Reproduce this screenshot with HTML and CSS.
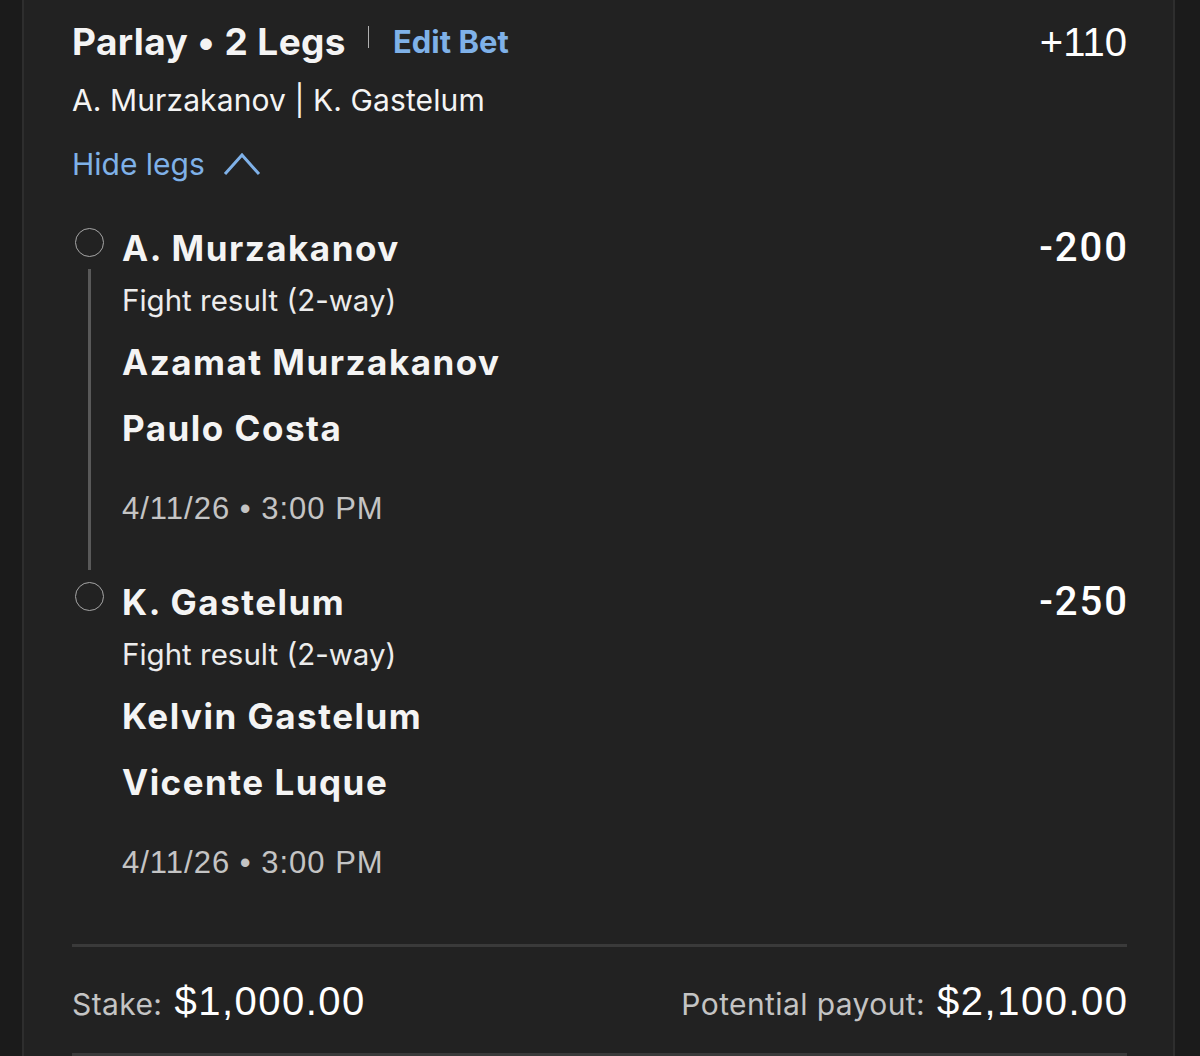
FILE: index.html
```html
<!DOCTYPE html>
<html lang="en">
<head>
<meta charset="utf-8">
<title>Parlay</title>
<link rel="stylesheet" href="styles.css">
</head>
<body>
<div class="page">
  <div class="card">
    <div class="head-row">
      <div class="title-group">
        <span class="title">Parlay • 2 Legs</span>
        <span class="sep"></span>
        <span class="edit">Edit Bet</span>
      </div>
      <span class="odds">+110</span>
    </div>
    <div class="subtitle">A. Murzakanov | K. Gastelum</div>
    <div class="toggle">
      <span>Hide legs</span>
      <svg class="chev" width="38" height="26" viewBox="0 0 38 26"><polyline points="2,23 19,4 36,23" fill="none" stroke="#7fb1e8" stroke-width="3"/></svg>
    </div>

    <div class="leg first">
      <div class="rail"><span class="dot"></span><span class="line"></span></div>
      <div class="leg-body">
        <div class="leg-head"><span class="leg-name">A. Murzakanov</span><span class="leg-odds">-200</span></div>
        <div class="market">Fight result (2-way)</div>
        <div class="fighter">Azamat Murzakanov</div>
        <div class="fighter">Paulo Costa</div>
        <div class="date">4/11/26 • 3:00 PM</div>
      </div>
    </div>

    <div class="leg last">
      <div class="rail"><span class="dot"></span></div>
      <div class="leg-body">
        <div class="leg-head"><span class="leg-name">K. Gastelum</span><span class="leg-odds">-250</span></div>
        <div class="market">Fight result (2-way)</div>
        <div class="fighter">Kelvin Gastelum</div>
        <div class="fighter">Vicente Luque</div>
        <div class="date">4/11/26 • 3:00 PM</div>
      </div>
    </div>

    <div class="divider"></div>
    <div class="totals">
      <div class="total"><span class="t-label">Stake:</span><span class="t-value">$1,000.00</span></div>
      <div class="total"><span class="t-label">Potential payout:</span><span class="t-value">$2,100.00</span></div>
    </div>
    <div class="divider bottom"></div>
  </div>
</div>
</body>
</html>
```

FILE: styles.css
```css
html, body {
  margin: 0;
  padding: 0;
  background: #1b1b1b;
  height: 1056px;
  overflow: hidden;
}
body {
  font-family: "Inter", "Roboto", "Liberation Sans", sans-serif;
  color: #f4f4f4;
}
.page {
  display: flex;
  height: 1056px;
}
.card {
  margin-left: 22px;
  width: 1055px;
  height: 1056px;
  background: #222222;
  border-left: 2px solid #2e2e2e;
  border-right: 2px solid #2e2e2e;
  padding: 0 46px 0 48px;
}

.head-row {
  display: flex;
  justify-content: space-between;
  align-items: center;
  margin-top: 20px;
  height: 44px;
}
.title-group {
  display: flex;
  align-items: center;
}
.title {
  font-size: 37px;
  font-weight: 700;
  letter-spacing: 0.4px;
  line-height: 44px;
}
.sep {
  width: 1px;
  height: 22px;
  background: #b0b0b0;
  margin: 0 24px 10px 22px;
}
.edit {
  font-size: 31px;
  font-weight: 700;
  color: #7fb1e8;
  line-height: 44px;
}
.odds {
  font-family: "Liberation Sans", "Helvetica", sans-serif;
  font-size: 40px;
  line-height: 44px;
  color: #ffffff;
}
.subtitle {
  margin-top: 18px;
  font-size: 30px;
  letter-spacing: 0.1px;
  line-height: 36px;
}
.toggle {
  margin-top: 28px;
  display: flex;
  align-items: center;
  height: 36px;
  font-size: 30px;
  line-height: 36px;
  color: #7fb1e8;
}
.chev {
  margin-left: 18px;
}

.leg {
  display: flex;
}
.leg.first {
  margin-top: 46px;
  padding-bottom: 55px;
}
.rail {
  width: 34px;
  margin-right: 16px;
  display: flex;
  flex-direction: column;
  align-items: center;
}
.dot {
  width: 27px;
  height: 27px;
  border: 1.5px solid #a6a6a6;
  border-radius: 50%;
  flex: none;
}
.line {
  flex: 1;
  width: 3px;
  background: #595959;
  margin-top: 12px;
  margin-bottom: -43px;
}
.leg-body {
  flex: 1;
}
.leg-head {
  display: flex;
  justify-content: space-between;
  align-items: center;
  height: 40px;
}
.leg-name {
  font-size: 35px;
  font-weight: 700;
  letter-spacing: 1.5px;
  line-height: 40px;
}
.leg-odds {
  font-family: "Roboto", "Liberation Sans", sans-serif;
  font-size: 40px;
  font-weight: 500;
  letter-spacing: 2px;
  margin-right: -2px;
  line-height: 40px;
  color: #ffffff;
}
.market {
  margin-top: 14px;
  font-size: 29.5px;
  line-height: 36px;
  color: #ececec;
}
.fighter {
  margin-top: 22px;
  font-size: 35px;
  font-weight: 700;
  letter-spacing: 1.5px;
  line-height: 44px;
}
.date {
  margin-top: 41px;
  font-family: "Liberation Sans", "Helvetica", sans-serif;
  font-size: 31px;
  letter-spacing: 1px;
  line-height: 36px;
  color: #c4c4c4;
}
.divider {
  margin-top: 63px;
  height: 3px;
  background: #3a3a3a;
}
.divider.bottom {
  margin-top: 30px;
}
.totals {
  margin-top: 32px;
  height: 44px;
  display: flex;
  justify-content: space-between;
  align-items: center;
}
.total {
  display: flex;
  align-items: baseline;
}
.t-label {
  font-size: 30px;
  letter-spacing: 0.4px;
  color: #c4c4c4;
  margin-right: 12px;
}
.t-value {
  font-family: "Liberation Sans", "Helvetica", sans-serif;
  font-size: 40px;
  letter-spacing: 1.5px;
  margin-right: -1.5px;
  color: #ffffff;
}
```
